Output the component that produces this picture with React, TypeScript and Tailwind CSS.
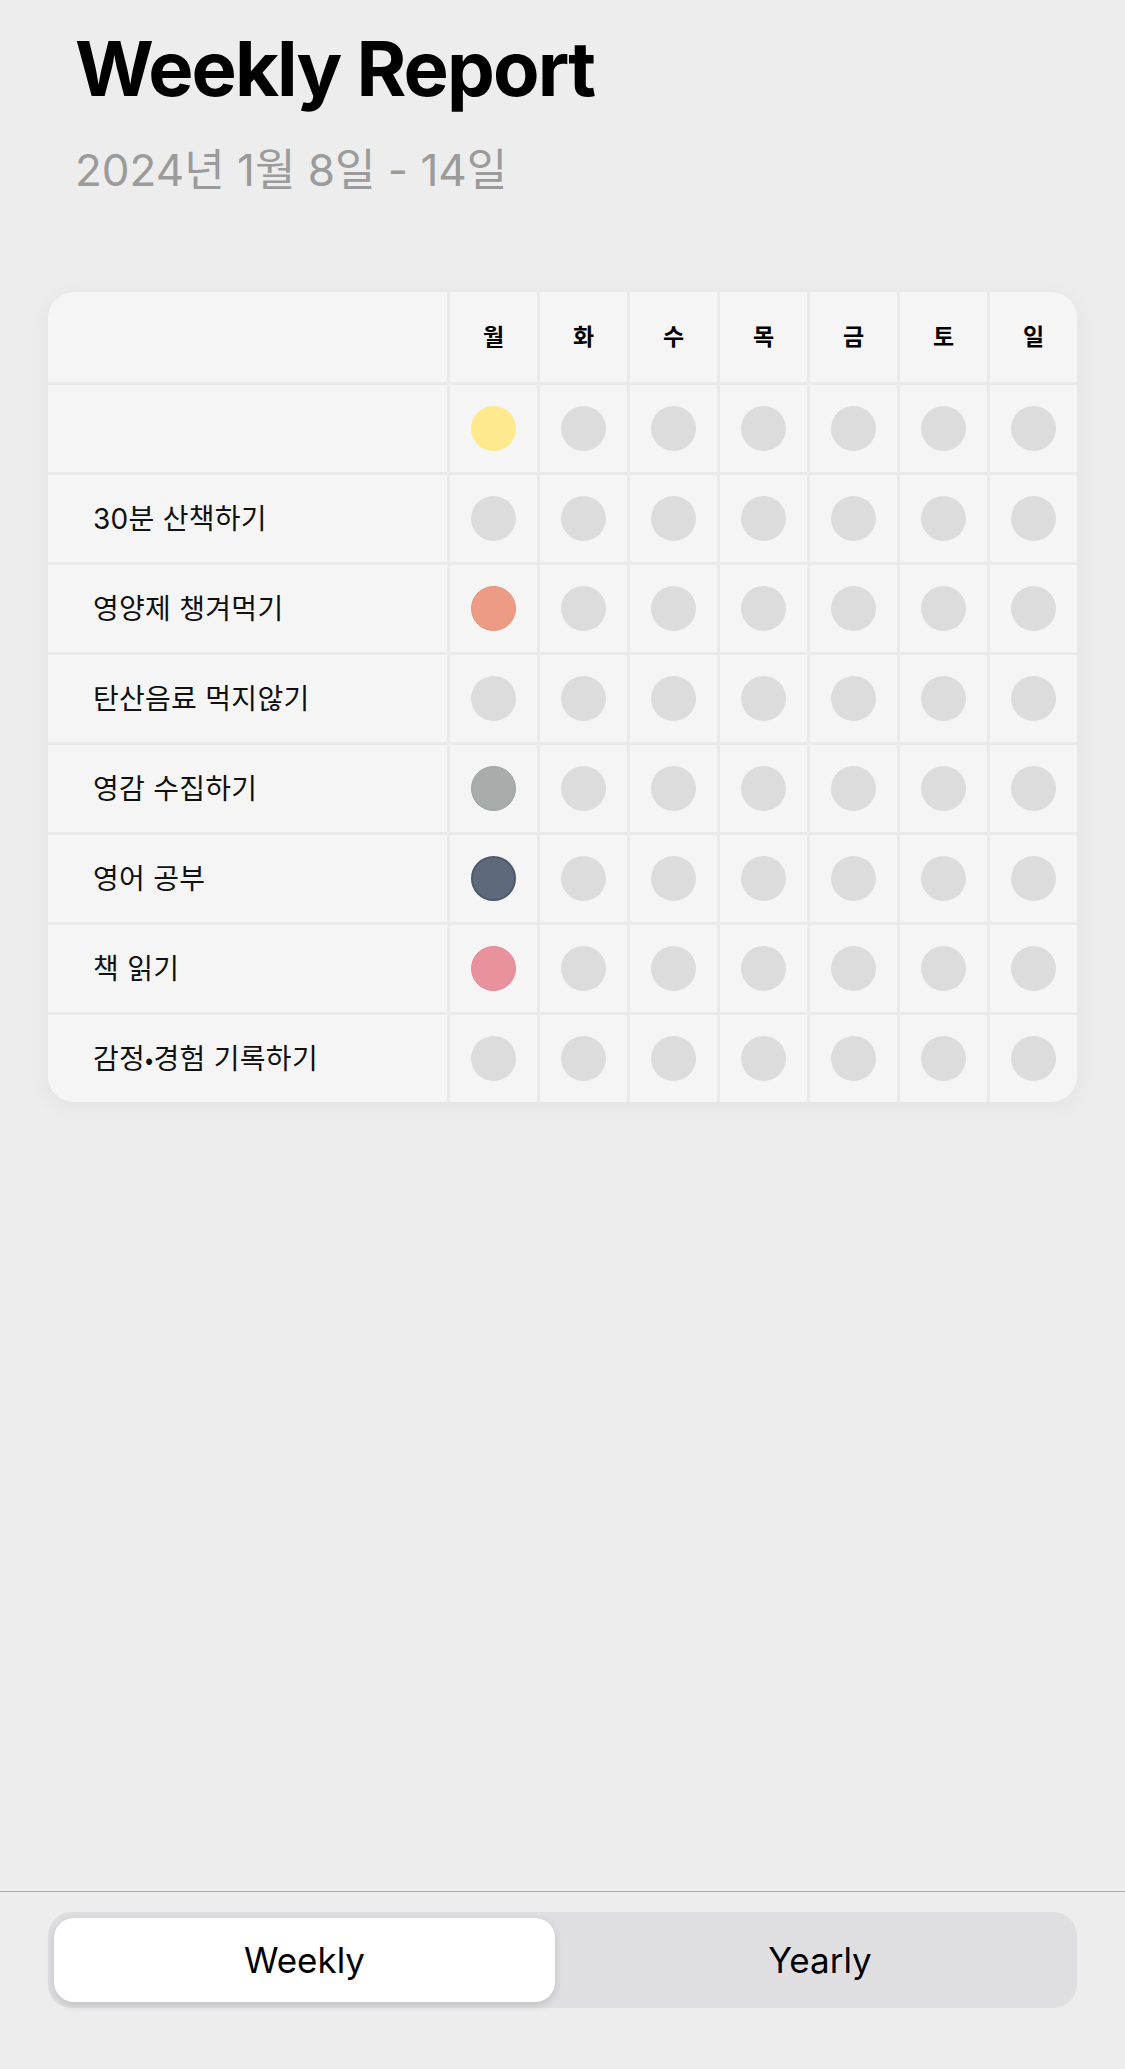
import React from "react";

const EMPTY = "bg-[#dcdcdc]";

type Row = { label: React.ReactNode; mon?: string };

const rows: Row[] = [
  { label: "", mon: "bg-[#fee98f]" },
  { label: "30분 산책하기" },
  { label: "영양제 챙겨먹기", mon: "bg-[#ee9b86] border border-[#e6917c]" },
  { label: "탄산음료 먹지않기" },
  { label: "영감 수집하기", mon: "bg-[#a8acab] border border-[#9da1a0]" },
  { label: "영어 공부", mon: "bg-[#5e6a7b] border-2 border-[#4e5a6b]" },
  { label: "책 읽기", mon: "bg-[#e8929e] border border-[#e18896]" },
  {
    label: (
      <>
        감정
        <span className="text-[24px]" style={{ fontFamily: '"Noto Sans CJK KR", sans-serif' }}>•</span>
        경험 기록하기
      </>
    ),
  },
];

const days = ["월", "화", "수", "목", "금", "토", "일"];

const font = { fontFamily: '"Inter", "Noto Sans CJK KR", sans-serif' };

export default function App() {
  return (
    <div
      className="min-h-[2069px] w-full bg-[#ededed] flex flex-col"
      style={font}
    >
      <div className="px-[75px] pt-[30px]">
        <h1 className="text-[76px] leading-none font-bold tracking-[-0.025em] text-black">
          Weekly Report
        </h1>
        <p className="mt-[42px] text-[44px] leading-none text-[#9b9b9b]">
          2024년 1월 8일 - 14일
        </p>
      </div>

      <div className="mx-[48px] mt-[100px] rounded-[26px] overflow-hidden bg-[#eaeaea] shadow-[0_4px_24px_rgba(0,0,0,0.05)] grid grid-cols-[399px_repeat(7,1fr)] grid-rows-[90px_repeat(8,87px)] gap-[3px]">
        <div className="bg-[#f5f5f5]" />
        {days.map((d) => (
          <div
            key={d}
            className="bg-[#f5f5f5] flex items-center justify-center text-[23px] font-semibold text-black"
          >
            {d}
          </div>
        ))}
        {rows.map((r, i) => (
          <React.Fragment key={i}>
            <div className="bg-[#f5f5f5] flex items-center pl-[45px] text-[28px] tracking-[0.01em] text-[#111111]">
              {r.label}
            </div>
            {days.map((d, j) => (
              <div
                key={d}
                className="bg-[#f5f5f5] flex items-center justify-center"
              >
                <div
                  className={`w-[45px] h-[45px] rounded-full box-border ${
                    j === 0 && r.mon ? r.mon : EMPTY
                  }`}
                />
              </div>
            ))}
          </React.Fragment>
        ))}
      </div>

      <div className="flex-1" />

      <div className="h-[178px] border-t border-[#adadad] pt-[20px] px-[48px]">
        <div className="h-[96px] rounded-[24px] bg-[#dfdfe1] p-[6px] grid grid-cols-[501px_1fr]">
          <div className="rounded-[20px] bg-white shadow-[0_3px_8px_rgba(0,0,0,0.14)] flex items-center justify-center text-[35px] text-black">
            Weekly
          </div>
          <div className="flex items-center justify-center pl-[14px] text-[35px] text-black">
            Yearly
          </div>
        </div>
      </div>
    </div>
  );
}
